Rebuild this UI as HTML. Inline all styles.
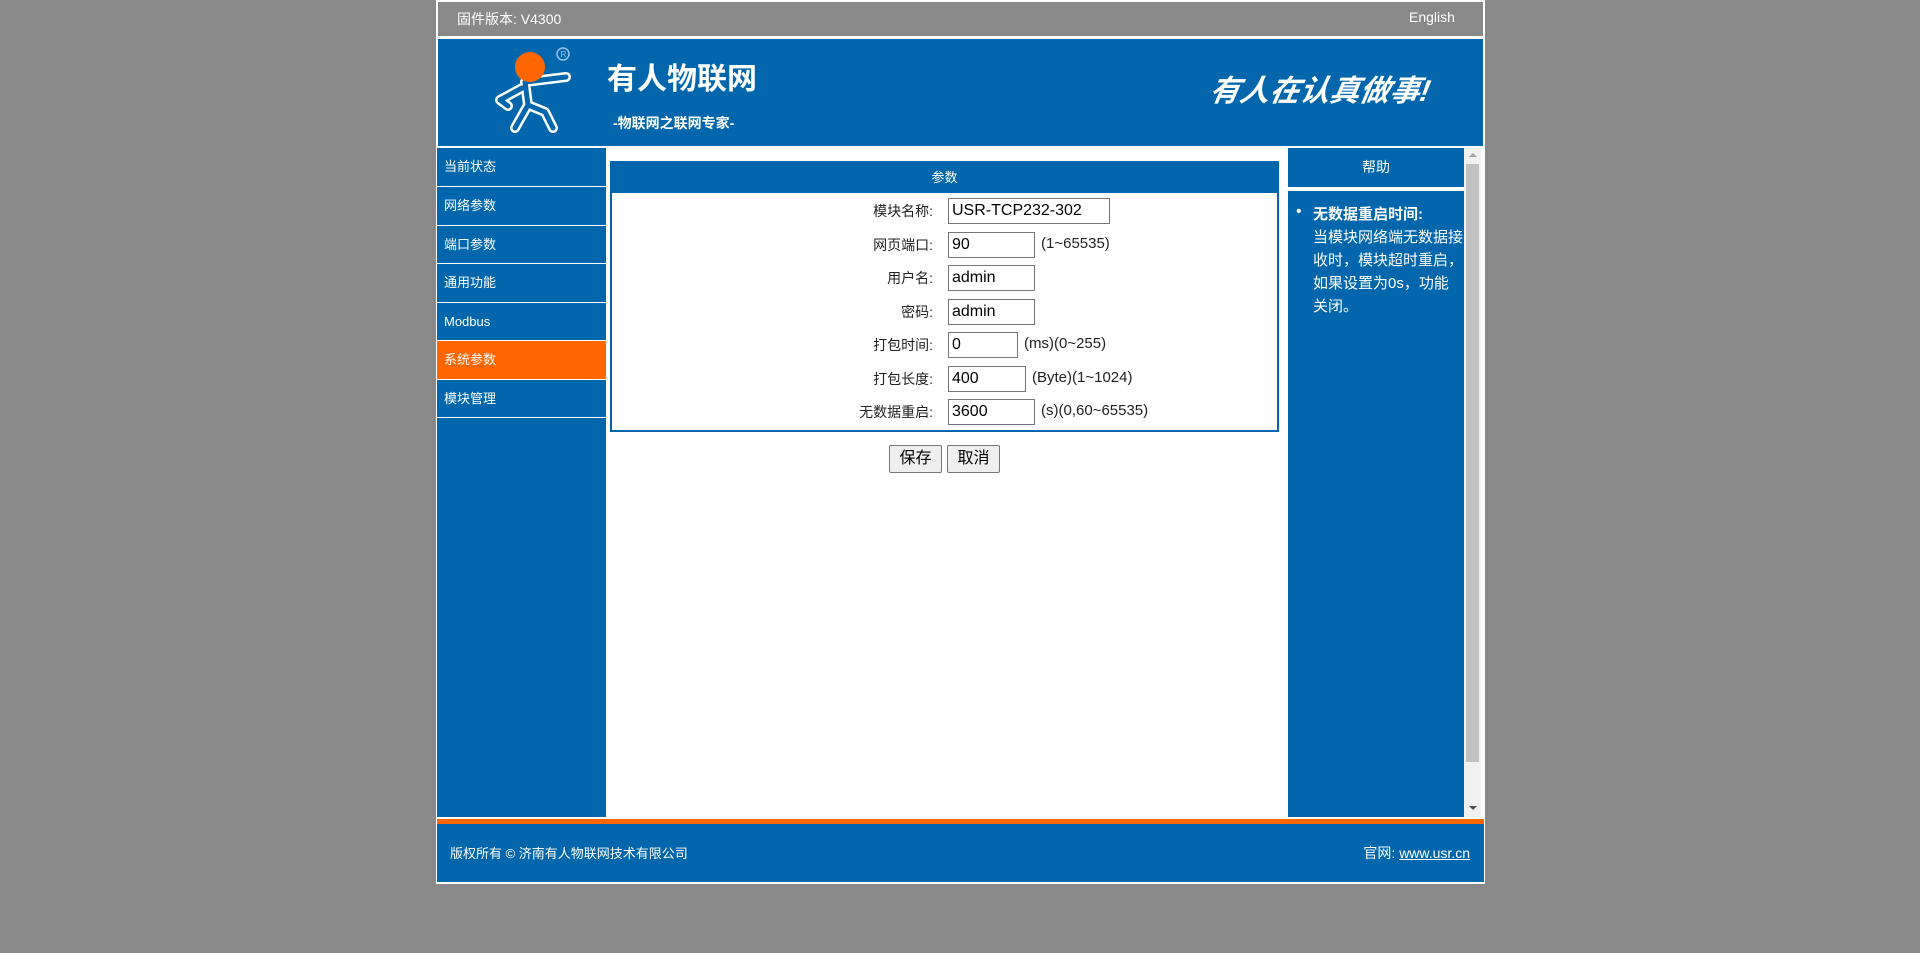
<!DOCTYPE html>
<html><head><meta charset="utf-8"><style>
*{margin:0;padding:0;box-sizing:border-box}
body{width:1920px;height:953px;background:#898989;font-family:"Liberation Sans","Noto Sans CJK SC",sans-serif;position:relative;overflow:hidden;color:#222}
.a{position:absolute}
.blue{background:#0166ab}
.wrap{left:436px;top:0;width:1049px;height:884px;background:#fff}
.side div{position:absolute;left:0;width:169px;height:38px;color:#fff;font-size:13px;line-height:38px;padding-left:7px;background:#0166ab}
.lbl{position:absolute;right:0;width:200px;text-align:right;font-size:14px}
.inp{position:absolute;height:26px;border:1px solid #767676;background:#fff;font-size:16px;line-height:24px;padding-left:3px;color:#000}
.hint{position:absolute;font-size:15px;color:#222}
.btn{position:absolute;top:445px;height:28px;border:1px solid #767676;background:#efefef;font-size:16px;line-height:26px;text-align:center;color:#000;border-radius:2px}
</style></head><body>
<div class="a wrap"></div>
<div class="a" style="left:438px;top:2px;width:1045px;height:34px;background:#898989"></div>
<div class="a" style="left:457px;top:9px;color:#fff;font-size:14px">固件版本: V4300</div>
<div class="a" style="left:1409px;top:9px;color:#fff;font-size:14px">English</div>
<div class="a blue" style="left:438px;top:39px;width:1045px;height:107px"></div>
<svg class="a" style="left:480px;top:40px" width="100" height="100" viewBox="480 40 100 100">
<g fill="none" stroke-linejoin="round" stroke-linecap="round">
<path d="M525 82 L566 77 M525 82 L528 105 L515 128 M528 105 L545 112 L553 128 M522 88 L500 100 L508 106" stroke="#fff" stroke-width="10"/>
<path d="M525 82 L566 77 M525 82 L528 105 L515 128 M528 105 L545 112 L553 128 M522 88 L500 100 L508 106" stroke="#0166ab" stroke-width="5"/>
</g>
<circle cx="530" cy="67" r="15" fill="#ff6600"/>
<circle cx="563" cy="54" r="6" fill="none" stroke="#9cc6e8" stroke-width="1.5"/>
<text x="560.5" y="57" font-size="8" fill="#9cc6e8" font-family="Liberation Sans">R</text>
</svg>
<div class="a" style="left:607px;top:62px;color:#fff;font-size:30px;font-weight:bold;line-height:36px">有人物联网</div>
<div class="a" style="left:613px;top:113px;color:#fff;font-size:14px;font-weight:bold">-物联网之联网专家-</div>
<div class="a" style="left:1210px;top:72px;color:#fff;font-size:30px;font-weight:bold;font-style:italic;transform:skewX(-10deg);line-height:40px">有人在认真做事!</div>
<div class="a side" style="left:437px;top:148px;width:169px;height:669px;background:#0166ab">
<div style="top:0">当前状态</div>
<div style="top:39px">网络参数</div>
<div style="top:78px">端口参数</div>
<div style="top:116px">通用功能</div>
<div style="top:155px">Modbus</div>
<div style="top:193px;background:#ff6600">系统参数</div>
<div style="top:232px">模块管理</div>
</div>
<div class="a" style="left:437px;top:186px;width:169px;height:1px;background:#fff"></div>
<div class="a" style="left:437px;top:225px;width:169px;height:1px;background:#fff"></div>
<div class="a" style="left:437px;top:263px;width:169px;height:1px;background:#fff"></div>
<div class="a" style="left:437px;top:302px;width:169px;height:1px;background:#fff"></div>
<div class="a" style="left:437px;top:340px;width:169px;height:1px;background:#fff"></div>
<div class="a" style="left:437px;top:379px;width:169px;height:1px;background:#fff"></div>
<div class="a" style="left:437px;top:417px;width:169px;height:1px;background:#fff"></div>
<div class="a" style="left:610px;top:161px;width:669px;height:271px;border:2px solid #0166ab;background:#fff"></div>
<div class="a blue" style="left:610px;top:161px;width:669px;height:32px;color:#fff;font-size:13px;text-align:center;line-height:34px">参数</div>
<div class="a" style="left:733px;top:0;width:200px;height:500px">
<div class="lbl" style="top:201px">模块名称:</div>
<div class="lbl" style="top:235px">网页端口:</div>
<div class="lbl" style="top:268px">用户名:</div>
<div class="lbl" style="top:302px">密码:</div>
<div class="lbl" style="top:335px">打包时间:</div>
<div class="lbl" style="top:369px">打包长度:</div>
<div class="lbl" style="top:402px">无数据重启:</div>
</div>
<div class="inp" style="left:948px;top:198px;width:162px">USR-TCP232-302</div>
<div class="inp" style="left:948px;top:232px;width:87px">90</div>
<div class="hint" style="left:1041px;top:235px">(1~65535)</div>
<div class="inp" style="left:948px;top:265px;width:87px">admin</div>
<div class="inp" style="left:948px;top:299px;width:87px">admin</div>
<div class="inp" style="left:948px;top:332px;width:70px">0</div>
<div class="hint" style="left:1024px;top:335px">(ms)(0~255)</div>
<div class="inp" style="left:948px;top:366px;width:78px">400</div>
<div class="hint" style="left:1032px;top:369px">(Byte)(1~1024)</div>
<div class="inp" style="left:948px;top:399px;width:87px">3600</div>
<div class="hint" style="left:1041px;top:402px">(s)(0,60~65535)</div>
<div class="btn" style="left:889px;width:53px">保存</div>
<div class="btn" style="left:947px;width:53px">取消</div>
<div class="a blue" style="left:1288px;top:148px;width:176px;height:39px;color:#fff;font-size:14px;text-align:center;line-height:39px">帮助</div>
<div class="a blue" style="left:1288px;top:191px;width:176px;height:626px"></div>
<div class="a" style="left:1296px;top:203px;color:#fff;font-size:16px">•</div>
<div class="a" style="left:1313px;top:203px;width:160px;color:#fff;font-size:15px;line-height:23px;white-space:nowrap"><b>无数据重启时间:</b><br>当模块网络端无数据接<br>收时，模块超时重启，<br>如果设置为0s，功能<br>关闭。</div>
<div class="a" style="left:1464px;top:148px;width:17px;height:669px;background:#f1f1f1"></div>
<div class="a" style="left:1466px;top:164px;width:13px;height:598px;background:#c1c1c1"></div>
<div class="a" style="left:1469px;top:153px;width:0;height:0;border-left:4px solid transparent;border-right:4px solid transparent;border-bottom:4px solid #a3a3a3"></div>
<div class="a" style="left:1469px;top:806px;width:0;height:0;border-left:4px solid transparent;border-right:4px solid transparent;border-top:4px solid #505050"></div>
<div class="a" style="left:437px;top:819px;width:1047px;height:5px;background:#ff6600"></div>
<div class="a blue" style="left:437px;top:824px;width:1047px;height:58px"></div>
<div class="a" style="left:450px;top:843px;color:#fff;font-size:13px">版权所有 © 济南有人物联网技术有限公司</div>
<div class="a" style="right:450px;top:843px;color:#fff;font-size:14px">官网: <u>www.usr.cn</u></div>
</body></html>
